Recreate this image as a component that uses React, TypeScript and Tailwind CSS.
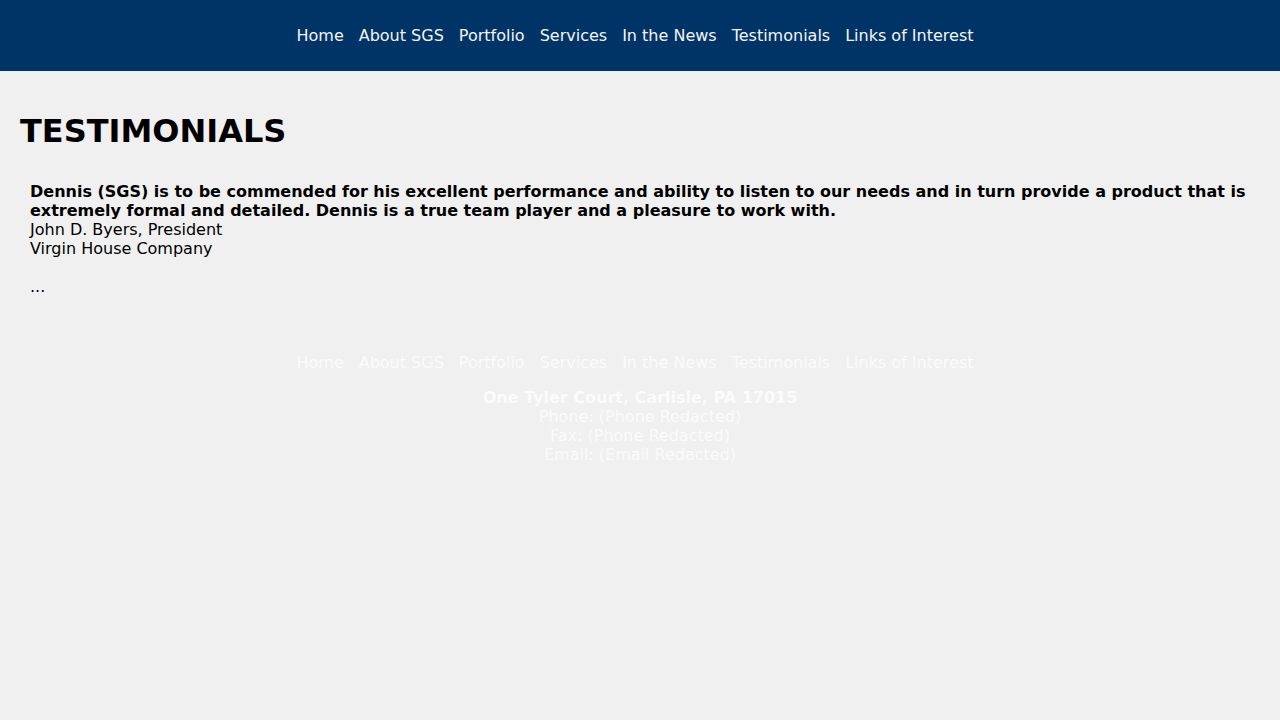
const links = [
  "Home",
  "About SGS",
  "Portfolio",
  "Services",
  "In the News",
  "Testimonials",
  "Links of Interest",
];

function NavLinks({ className }: { className: string }) {
  return (
    <ul className={`flex justify-center gap-[15px] pr-[10px] ${className}`}>
      {links.map((l) => (
        <li key={l}>
          <a href="#">{l}</a>
        </li>
      ))}
    </ul>
  );
}

export default function App() {
  return (
    <div
      className="min-h-[720px] bg-[#f0f0f0] text-[16px] leading-[19px] text-black"
      style={{ fontFamily: '"DejaVu Sans", sans-serif' }}
    >
      <header className="flex h-[71px] items-center bg-[#003366]">
        <nav className="w-full">
          <NavLinks className="text-[#f4f4f4]" />
        </nav>
      </header>

      <main className="px-5 pt-[42px]">
        <h1 className="text-[32px] font-bold leading-[37px]">TESTIMONIALS</h1>
        <div className="px-[10px] pt-[32px]">
          <p className="font-bold">
            Dennis (SGS) is to be commended for his excellent performance and
            ability to listen to our needs and in turn provide a product that is
            extremely formal and detailed. Dennis is a true team player and a
            pleasure to work with.
          </p>
          <p>John D. Byers, President</p>
          <p>Virgin House Company</p>
          <p className="mt-[19px]">...</p>
        </div>
      </main>

      <footer className="pt-[57px] text-[#fbfbfb]">
        <NavLinks className="" />
        <div className="mt-[16px] text-center">
          <p className="font-bold">One Tyler Court, Carlisle, PA 17015</p>
          <p>Phone: (Phone Redacted)</p>
          <p>Fax: (Phone Redacted)</p>
          <p>Email: (Email Redacted)</p>
        </div>
      </footer>
    </div>
  );
}
